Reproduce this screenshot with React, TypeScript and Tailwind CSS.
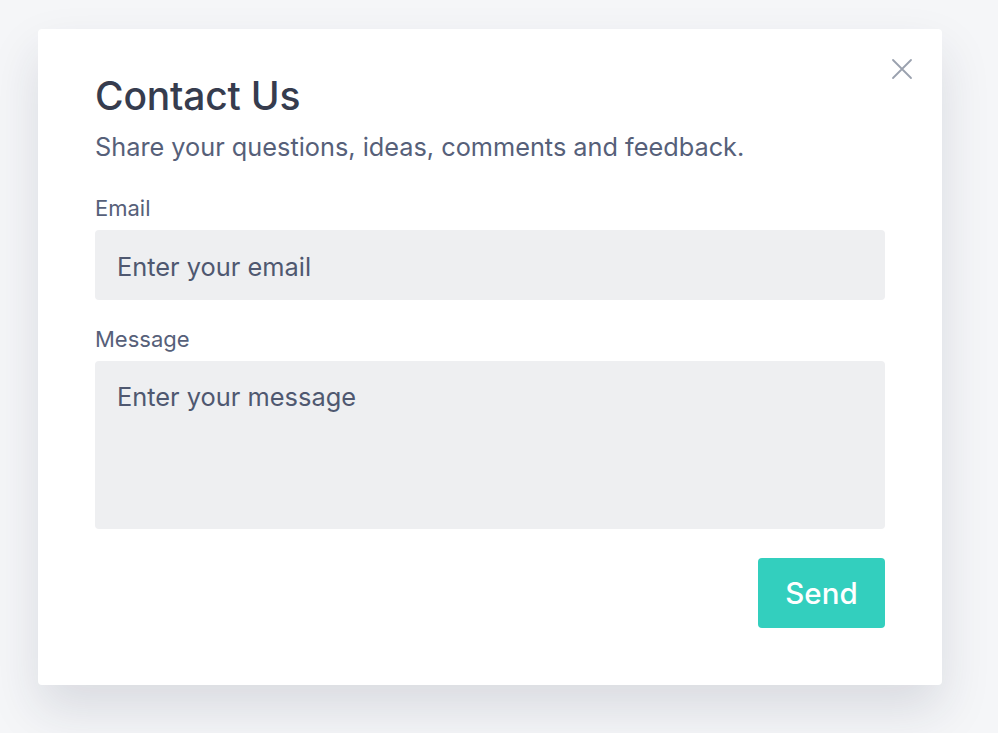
import React from "react";

export default function App() {
  return (
    <div
      className="w-[998px] h-[733px] bg-[#f5f6f8] pt-[29px] pl-[38px] overflow-hidden"
      style={{ fontFamily: "Inter, 'Noto Sans', sans-serif" }}
    >
      <div className="relative w-[904px] h-[656px] bg-white rounded-[4px] shadow-[0_24px_50px_rgba(30,40,70,0.13)] pl-[57px] pr-[57px] pt-[41px]">
        <button className="absolute right-[28px] top-[28px] w-[24px] h-[24px] flex items-center justify-center text-[#9aa1ae]">
          <svg width="22" height="22" viewBox="0 0 22 22" fill="none" stroke="currentColor" strokeWidth="1.8" strokeLinecap="round">
            <path d="M2 2 L20 20 M20 2 L2 20" />
          </svg>
        </button>
        <h1 className="text-[39px] leading-[52px] font-medium text-[#363c4e] tracking-[-0.2px]">Contact Us</h1>
        <p className="mt-[9px] text-[25.3px] leading-[32px] text-[#566079]">
          Share your questions, ideas, comments and feedback.
        </p>
        <div className="mt-[31px] text-[22px] leading-[28px] text-[#566079]">Email</div>
        <div className="mt-[8px] h-[70px] bg-[#eeeff1] rounded-[4px] flex items-center px-[22px] pt-[4px] text-[25.4px] text-[#4f5870]">
          Enter your email
        </div>
        <div className="mt-[25px] text-[22px] leading-[28px] text-[#566079]">Message</div>
        <div className="mt-[8px] h-[168px] bg-[#eeeff1] rounded-[4px] px-[22px] pt-[20px] text-[25.4px] leading-[32px] text-[#4f5870]">
          Enter your message
        </div>
        <div className="mt-[29px] flex justify-end">
          <button className="w-[127px] h-[70px] bg-[#33cfbe] rounded-[4px] text-white text-[29.5px] font-medium">
            Send
          </button>
        </div>
      </div>
    </div>
  );
}
